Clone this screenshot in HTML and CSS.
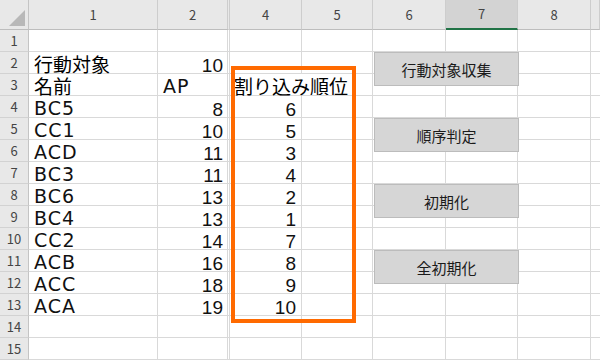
FILE: index.html
```html
<!DOCTYPE html>
<html lang="ja">
<head>
	<meta charset="UTF-8">
	<title>割り込み順位</title>
	<link rel="stylesheet" href="styles.css">
</head>
<body>
	<div class="sheet">
		<div class="row head">
			<span class="corner"><svg width="29" height="30" viewBox="0 0 29 30"><polygon points="25,10 25,26 9,26" fill="#b8b8b8"/></svg></span>
			<span>1</span><span class="c2">2</span><span>4</span><span>5</span><span>6</span><span class="sel">7</span><span>8</span><span></span>
		</div>
		<div class="row"><span class="rh">1</span><span></span><span class="c2"></span><span></span><span></span><span></span><span></span><span></span><span></span></div>
		<div class="row"><span class="rh">2</span><span>行動対象</span><span class="c2 num">10</span><span></span><span></span><span></span><span></span><span></span><span></span></div>
		<div class="row"><span class="rh">3</span><span>名前</span><span class="c2 name">AP</span><span class="spill">割り込み順位</span><span></span><span></span><span></span><span></span><span></span></div>
		<div class="row"><span class="rh">4</span><span class="name">BC5</span><span class="c2 num">8</span><span class="num">6</span><span></span><span></span><span></span><span></span><span></span></div>
		<div class="row"><span class="rh">5</span><span class="name">CC1</span><span class="c2 num">10</span><span class="num">5</span><span></span><span></span><span></span><span></span><span></span></div>
		<div class="row"><span class="rh">6</span><span class="name">ACD</span><span class="c2 num">11</span><span class="num">3</span><span></span><span></span><span></span><span></span><span></span></div>
		<div class="row"><span class="rh">7</span><span class="name">BC3</span><span class="c2 num">11</span><span class="num">4</span><span></span><span></span><span></span><span></span><span></span></div>
		<div class="row"><span class="rh">8</span><span class="name">BC6</span><span class="c2 num">13</span><span class="num">2</span><span></span><span></span><span></span><span></span><span></span></div>
		<div class="row"><span class="rh">9</span><span class="name">BC4</span><span class="c2 num">13</span><span class="num">1</span><span></span><span></span><span></span><span></span><span></span></div>
		<div class="row"><span class="rh">10</span><span class="name">CC2</span><span class="c2 num">14</span><span class="num">7</span><span></span><span></span><span></span><span></span><span></span></div>
		<div class="row"><span class="rh">11</span><span class="name">ACB</span><span class="c2 num">16</span><span class="num">8</span><span></span><span></span><span></span><span></span><span></span></div>
		<div class="row"><span class="rh">12</span><span class="name">ACC</span><span class="c2 num">18</span><span class="num">9</span><span></span><span></span><span></span><span></span><span></span></div>
		<div class="row"><span class="rh">13</span><span class="name">ACA</span><span class="c2 num">19</span><span class="num">10</span><span></span><span></span><span></span><span></span><span></span></div>
		<div class="row"><span class="rh">14</span><span></span><span class="c2"></span><span></span><span></span><span></span><span></span><span></span><span></span></div>
		<div class="row"><span class="rh">15</span><span></span><span class="c2"></span><span></span><span></span><span></span><span></span><span></span><span></span></div>

		<!-- 図形 -->
		<div class="frame"></div>
		<button class="btn btn-1">行動対象収集</button>
		<button class="btn btn-2">順序判定</button>
		<button class="btn btn-3">初期化</button>
		<button class="btn btn-4">全初期化</button>
	</div>
</body>
</html>
```

FILE: styles.css
```css
*{
	margin: 0;
	padding: 0;
	box-sizing: border-box;
}
body{
	background: #fff;
	font-family: "Noto Sans CJK JP", "Noto Sans", sans-serif;
	color: #000;
}
.sheet{
	position: relative;
	width: 600px;
	height: 360px;
	overflow: hidden;
}
.row{
	display: grid;
	grid-template-columns: 29px 129px 72px 72px 71px 73px 72px 73px 1fr;
	height: 22px;
}
.row span{
	display: block;
	height: 22px;
	padding: 1px 5px 0 5px;
	border-right: 1px solid #d9d9d9;
	border-bottom: 1px solid #d9d9d9;
	font-size: 19px;
	line-height: 21px;
	white-space: nowrap;
}
.row .c2{
	border-right: 3px double #d9d9d9;
}
.row .num{
	font-family: "Liberation Sans", sans-serif;
	text-align: right;
	padding-top: 3px;
	color: #111;
}
.row .c2.num{
	padding-right: 4px;
}
.row .spill{
	border-right-color: transparent;
	padding-left: 4px;
}
.row .name{
	font-family: "DejaVu Sans", "Noto Sans CJK JP", sans-serif;
	letter-spacing: 1px;
	line-height: 20px;
	padding-top: 2px;
	color: #111;
}
.row .rh{
	padding: 0;
	background: #e8e8e8;
	border-right: 1px solid #c4c4c4;
	border-bottom: 1px solid #d2d2d2;
	font-size: 13px;
	line-height: 21px;
	text-align: center;
	color: #444;
}

/* 列見出し */
.head{
	height: 30px;
}
.head span{
	height: 30px;
	padding: 0;
	background: #e8e8e8;
	border-right: 1px solid #cdcdcd;
	border-bottom: 1px solid #bdbdbd;
	font-size: 13px;
	line-height: 29px;
	text-align: center;
	color: #444;
}
.head .c2{
	border-right: 3px double #cdcdcd;
}
.head .corner{
	border-right-color: #c4c4c4;
}
.head .corner svg{
	display: block;
}
.head .sel{
	background: #d3d3d3;
	border-bottom: 2px solid #217346;
	line-height: 28px;
}

/* 図形 */
.frame{
	position: absolute;
	left: 231px;
	top: 66px;
	width: 125px;
	height: 257px;
	border: 4px solid #ff6a00;
}
.btn{
	position: absolute;
	left: 374px;
	width: 145px;
	height: 34px;
	background: #d6d6d6;
	border: 1px solid #bcbcbc;
	font-family: "Noto Sans CJK JP", sans-serif;
	font-size: 15px;
	color: #1a1a1a;
}
.btn-1{ top: 52px; }
.btn-2{ top: 118px; }
.btn-3{ top: 184px; }
.btn-4{ top: 250px; }
```
